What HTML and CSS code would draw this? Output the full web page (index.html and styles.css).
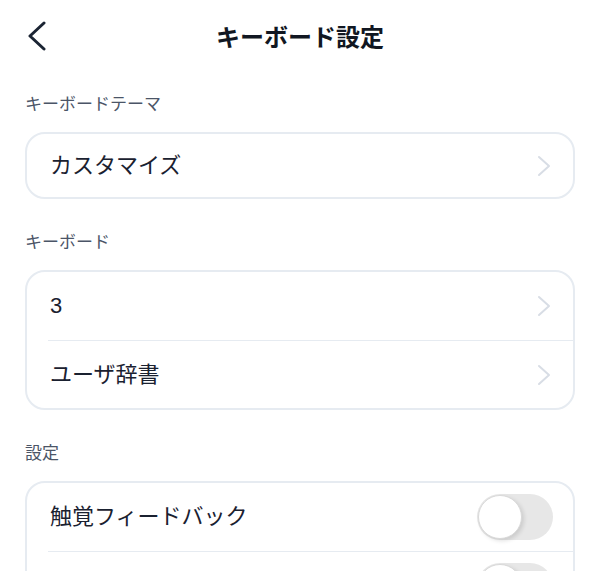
FILE: index.html
```html
<!doctype html>
<html lang="ja">
 <head>
  <meta charset="UTF-8">
  <meta name="viewport" content="width=device-width, initial-scale=1">
  <link rel="stylesheet" href="styles.css">
  <title>キーボード設定</title>
 </head>
 <body>
  <header class="topbar">
    <button class="back" aria-label="戻る">
      <svg width="20" height="30" viewBox="0 0 20 30">
        <polyline points="17,2 3,15 17,28" fill="none" stroke="#1b2433" stroke-width="3" stroke-linecap="round" stroke-linejoin="round"/>
      </svg>
    </button>
    <h1 class="title">キーボード設定</h1>
  </header>

  <main class="page">
    <section class="group group-first">
      <p class="group-label">キーボードテーマ</p>
      <div class="card">
        <div class="row row-single">
          <span class="row-text">カスタマイズ</span>
          <svg class="chevron" width="14" height="22" viewBox="0 0 14 22">
            <polyline points="2,2 12,11 2,20" fill="none" stroke="#d8dde5" stroke-width="2" stroke-linecap="round" stroke-linejoin="round"/>
          </svg>
        </div>
      </div>
    </section>

    <section class="group">
      <p class="group-label">キーボード</p>
      <div class="card">
        <div class="row">
          <span class="row-text">3</span>
          <svg class="chevron" width="14" height="22" viewBox="0 0 14 22">
            <polyline points="2,2 12,11 2,20" fill="none" stroke="#d8dde5" stroke-width="2" stroke-linecap="round" stroke-linejoin="round"/>
          </svg>
        </div>
        <div class="row">
          <span class="row-text">ユーザ辞書</span>
          <svg class="chevron" width="14" height="22" viewBox="0 0 14 22">
            <polyline points="2,2 12,11 2,20" fill="none" stroke="#d8dde5" stroke-width="2" stroke-linecap="round" stroke-linejoin="round"/>
          </svg>
        </div>
      </div>
    </section>

    <section class="group">
      <p class="group-label">設定</p>
      <div class="card">
        <div class="row">
          <span class="row-text">触覚フィードバック</span>
          <span class="toggle"><span class="knob"></span></span>
        </div>
        <div class="row">
          <span class="row-text">サウンド効果</span>
          <span class="toggle"><span class="knob"></span></span>
        </div>
      </div>
    </section>
  </main>
 </body>
</html>
```

FILE: styles.css
```css
*{
  box-sizing: border-box;
}
body{
  margin: 0;
  width: 600px;
  background: #ffffff;
  color: #1a2130;
  font-family: "Liberation Sans", "Noto Sans CJK JP", sans-serif;
}
.topbar{
  position: relative;
  height: 72px;
  display: flex;
  align-items: center;
  justify-content: center;
}
.back{
  position: absolute;
  left: 27px;
  top: 21px;
  padding: 0;
  border: none;
  background: none;
  display: flex;
}
.title{
  margin: 0;
  font-size: 24px;
  line-height: 30px;
  font-weight: 700;
  color: #111722;
  font-family: "Noto Sans CJK JP", sans-serif;
}
.page{
  padding: 0 25px;
}
.group{
  margin-top: 33px;
}
.group-first{
  margin-top: 22px;
}
.group-label{
  margin: 0 0 16px 0;
  font-size: 17px;
  line-height: 22px;
  color: #4b5567;
}
.card{
  border: 2px solid #e6ebf1;
  border-radius: 20px;
  overflow: hidden;
}
.row{
  height: 68px;
  margin-left: 21px;
  padding: 0 22px 0 2px;
  display: flex;
  align-items: center;
  justify-content: space-between;
}
.row + .row{
  border-top: 1px solid #e6ebf1;
}
.row-single{
  height: 63px;
}
.row-text{
  font-size: 22px;
  line-height: 28px;
}
.chevron{
  display: block;
}
.toggle{
  width: 76px;
  height: 46px;
  margin-right: -2px;
  border-radius: 23px;
  background: #e7e7e7;
  padding: 1px;
  display: flex;
}
.knob{
  width: 44px;
  height: 44px;
  border-radius: 50%;
  background: #ffffff;
  border: 1px solid #d9d9d9;
  box-shadow: 2px 2px 4px rgba(0, 0, 0, 0.12);
}
```
